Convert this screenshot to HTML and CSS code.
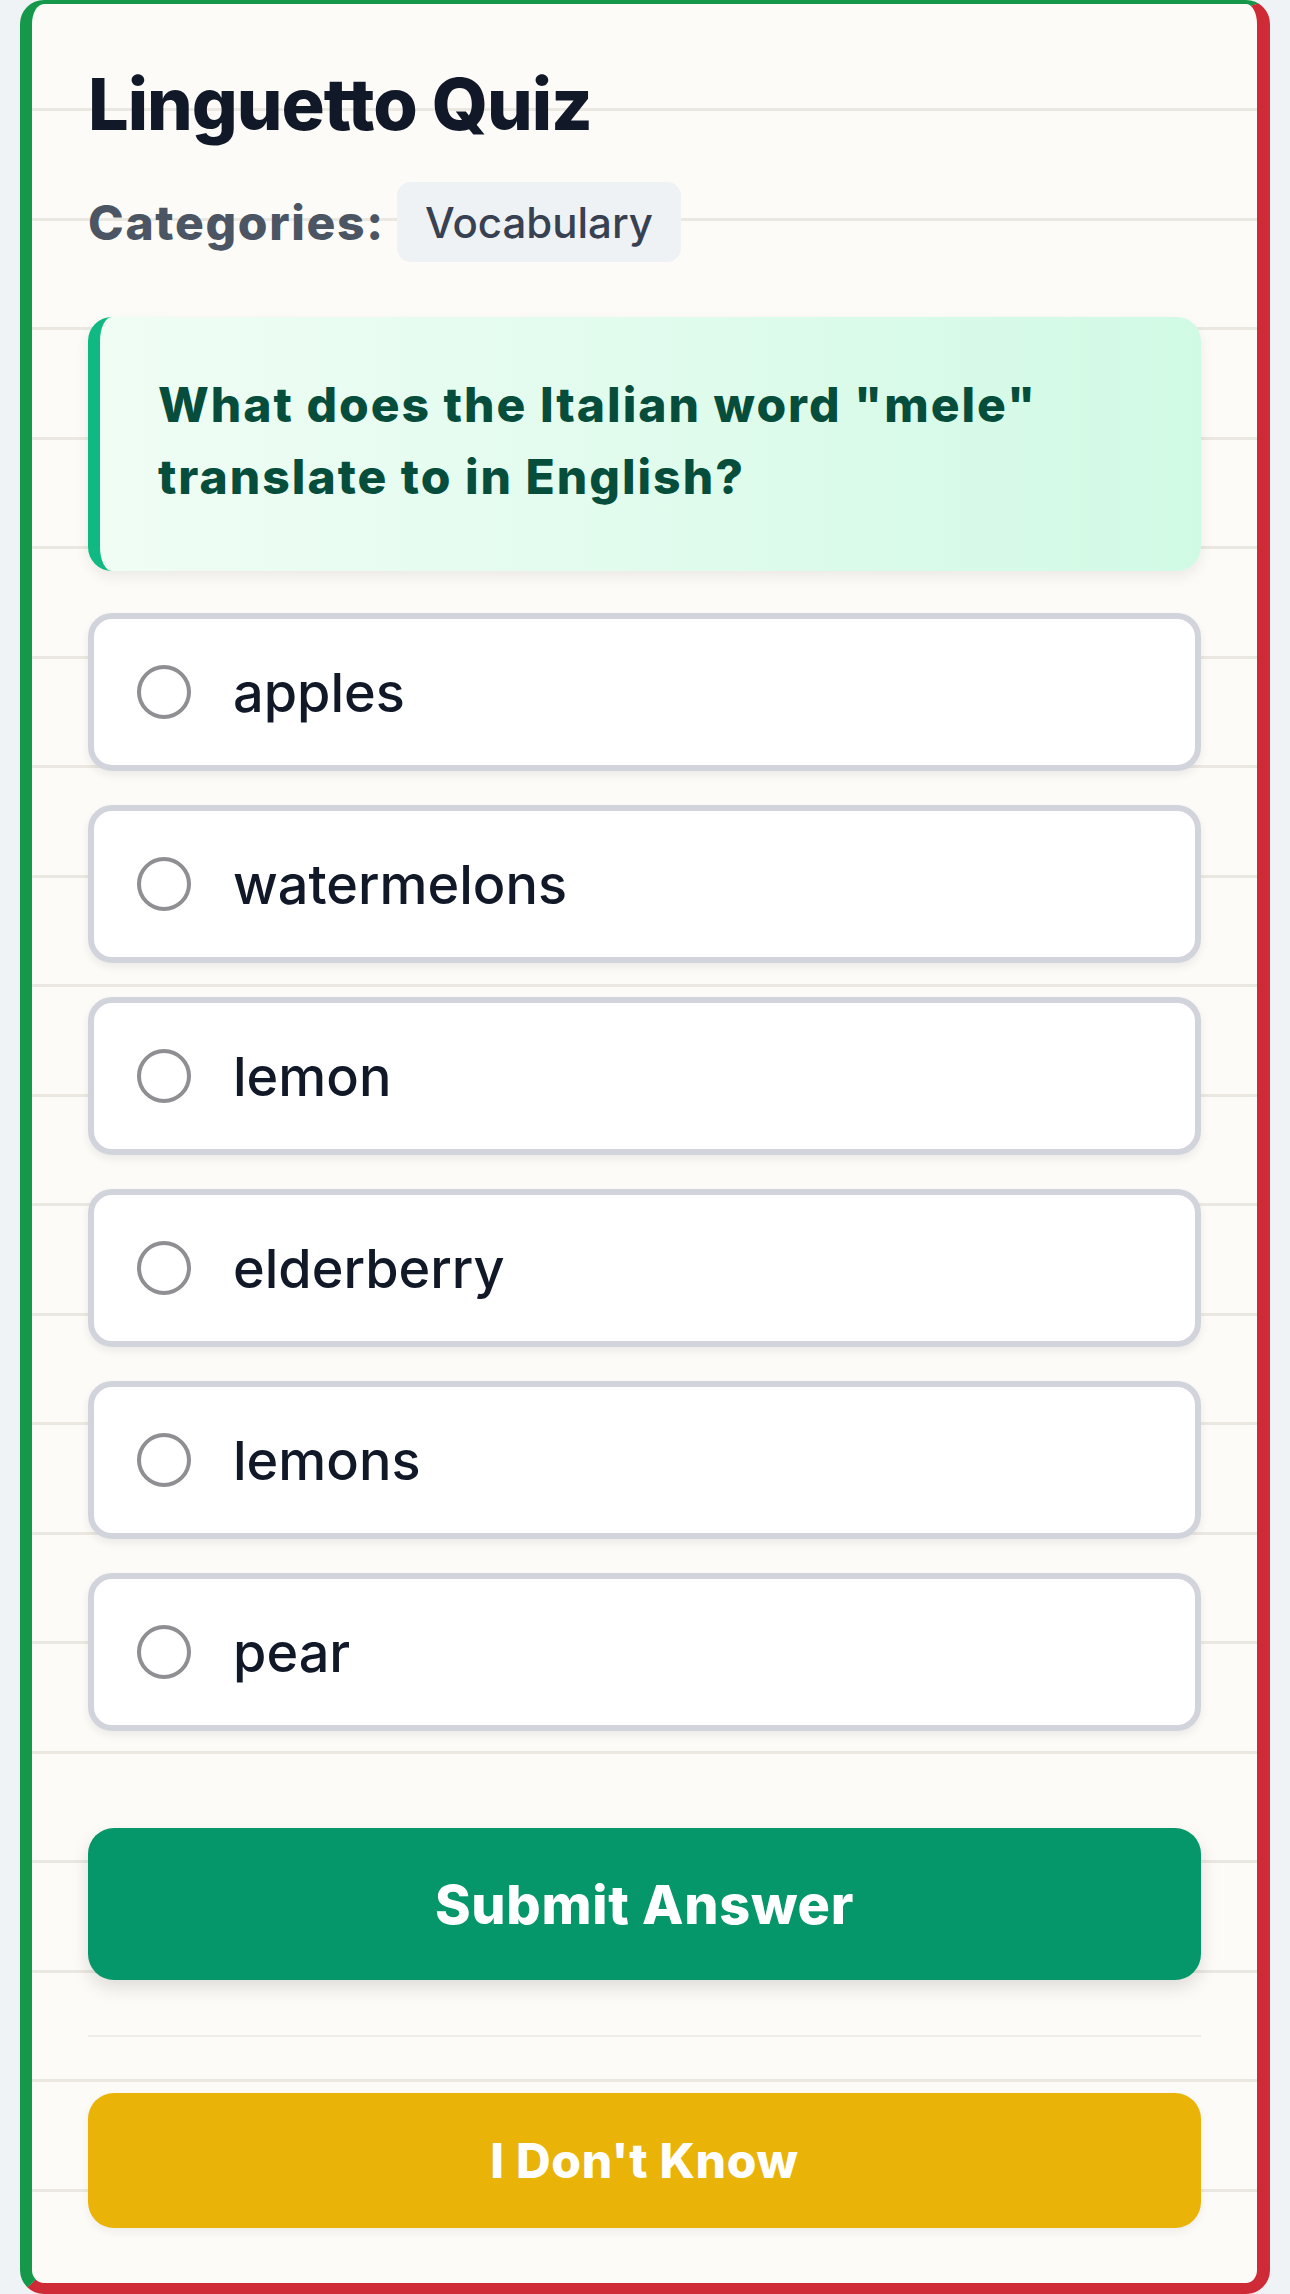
FILE: index.html
```html
<!DOCTYPE html>
<html lang="en">
<head>
  <meta charset="UTF-8">
  <meta name="viewport" content="width=device-width, initial-scale=1.0">
  <title>Linguetto Quiz</title>
  <link rel="stylesheet" href="styles.css">
</head>
<body>
  <div class="quiz-card">
    <h1 class="quiz-title">Linguetto Quiz</h1>

    <!--CATEGORIES-->
    <div class="categories">
      <span class="categories-label">Categories:</span>
      <span class="chip">Vocabulary</span>
    </div>

    <!--QUESTION-->
    <div class="question">
      <p>What does the Italian word "mele" translate to in English?</p>
    </div>

    <!--ANSWERS-->
    <div class="options">
      <label class="option">
        <input type="radio" name="answer" value="apples">
        <span>apples</span>
      </label>
      <label class="option">
        <input type="radio" name="answer" value="watermelons">
        <span>watermelons</span>
      </label>
      <label class="option">
        <input type="radio" name="answer" value="lemon">
        <span>lemon</span>
      </label>
      <label class="option">
        <input type="radio" name="answer" value="elderberry">
        <span>elderberry</span>
      </label>
      <label class="option">
        <input type="radio" name="answer" value="lemons">
        <span>lemons</span>
      </label>
      <label class="option">
        <input type="radio" name="answer" value="pear">
        <span>pear</span>
      </label>
    </div>

    <button class="btn btn-submit">Submit Answer</button>

    <div class="skip-row">
      <button class="btn btn-skip">I Don't Know</button>
    </div>
  </div>
</body>
</html>
```

FILE: styles.css
```css
body {
  background-color: #eff3f6;
  margin: 0;
  font-family: Inter, 'Noto Sans', sans-serif;
}
.quiz-card {
  margin: 0 20px;
  padding: 52px 56px 55px 56px;
  border-style: solid;
  border-width: 4px 13px 11px 12px;
  border-color: #15984a #ce2b37 #ce2b37 #15984a;
  border-radius: 24px;
  background-color: #fcfbf7;
  /* notebook paper lines */
  background-image: repeating-linear-gradient(
    to bottom,
    transparent 0,
    transparent 104px,
    #eae8e1 104px,
    #eae8e1 107px,
    transparent 107px,
    transparent 109.5px
  );
}
.quiz-title {
  margin: 0;
  font-size: 72px;
  line-height: 96px;
  font-weight: 800;
  letter-spacing: -1px;
  color: #111827;
}
.categories {
  display: flex;
  align-items: center;
  gap: 12px;
  margin-top: 30px;
}
.categories-label {
  font-size: 48px;
  font-weight: 800;
  letter-spacing: 1.7px;
  color: #4b5563;
}
.chip {
  display: flex;
  align-items: center;
  height: 80px;
  padding: 0 28px;
  border-radius: 14px;
  background-color: #eff2f5;
  font-size: 42px;
  font-weight: 500;
  color: #374151;
}
.question {
  margin-top: 55px;
  padding: 52px 60px 58px 58px;
  border-left: 12px solid #10b981;
  border-radius: 24px;
  background-image: linear-gradient(to right, #f0fdf5, #d1fae5);
  box-shadow: 0 6px 14px rgba(0, 0, 0, 0.07);
}
.question p {
  margin: 0;
  font-size: 48px;
  line-height: 72px;
  font-weight: 800;
  letter-spacing: 2px;
  color: #064e3b;
}
.options {
  display: flex;
  flex-direction: column;
  gap: 34px;
  margin-top: 42px;
}
.option {
  display: flex;
  align-items: center;
  gap: 42px;
  box-sizing: border-box;
  height: 158px;
  padding: 0 43px;
  background-color: white;
  border: 6px solid #d1d5db;
  border-radius: 24px;
  box-shadow: 0 4px 8px rgba(0, 0, 0, 0.07);
  font-size: 54px;
  font-weight: 500;
  color: #111827;
}
.option input {
  appearance: none;
  -webkit-appearance: none;
  flex-shrink: 0;
  box-sizing: border-box;
  width: 54px;
  height: 54px;
  margin: 0;
  border: 4px solid #8e8e93;
  border-radius: 50%;
  background-color: white;
}
.btn {
  display: block;
  width: 100%;
  border: none;
  color: white;
  font-family: Inter, 'Noto Sans', sans-serif;
  font-weight: 800;
  letter-spacing: 0.7px;
  cursor: pointer;
}
.btn-submit {
  margin-top: 97px;
  height: 152px;
  border-radius: 26px;
  background-color: #059669;
  font-size: 54px;
  box-shadow: 0 8px 18px rgba(0, 0, 0, 0.12);
}
.skip-row {
  margin-top: 55px;
  padding-top: 56px;
  border-top: 2px solid #eeede8;
}
.btn-skip {
  height: 135px;
  border-radius: 26px;
  background-color: #eab308;
  font-size: 48px;
  box-shadow: 0 4px 10px rgba(0, 0, 0, 0.06);
}
```
